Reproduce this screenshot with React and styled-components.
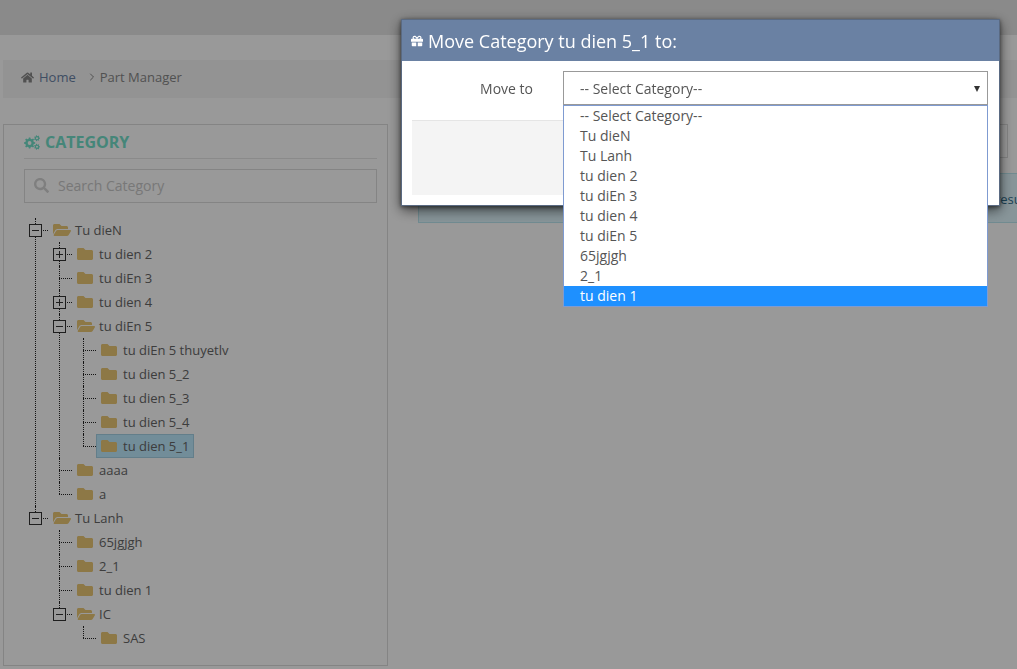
import React from "react";
import styled, { createGlobalStyle } from "styled-components";
import { ChevronRight } from "lucide-react";
import { FaHome, FaSearch, FaFolder, FaFolderOpen, FaGift } from "react-icons/fa";

const Global = createGlobalStyle`
  html, body { margin: 0; padding: 0; height: 669px; overflow: hidden; background: #fff; }
  body { font-family: "Open Sans", "Liberation Sans", sans-serif; font-size: 13px; color: #555; }
  * { box-sizing: border-box; }
`;

const Page = styled.div`
  height: 669px;
  overflow: hidden;
`;
const TopBar = styled.header`
  height: 35px;
  background: #e6e6e6;
`;
const Breadcrumb = styled.nav`
  margin: 25px 0 26px 3px;
  height: 38px;
  padding: 0 0 4px 18px;
  background: #f5f5f5;
  display: flex;
  align-items: center;
  font-size: 13px;
  color: #888;
`;
const HomeIcon = styled(FaHome)`
  width: 13px;
  height: 13px;
  color: #888;
  margin-right: 5px;
`;
const HomeLink = styled.a`
  color: #6a82a5;
`;
const Crumb = styled(ChevronRight)`
  width: 12px;
  height: 12px;
  color: #888;
  margin: 0 2px 0 10px;
`;
const Columns = styled.div`
  display: grid;
  grid-template-columns: 385px 1fr;
  column-gap: 30px;
  margin-left: 3px;
`;
const Panel = styled.section`
  height: 542px;
  border: 1px solid #ddd;
  padding: 0 10px 0 20px;
`;
const PanelTitle = styled.h2`
  margin: 0;
  height: 34px;
  display: flex;
  align-items: center;
  gap: 5px;
  font-size: 16px;
  font-weight: 700;
  color: #73e0ca;
  border-bottom: 1px solid #e6e6e6;
  padding-top: 1px;
`;
const SearchBox = styled.label`
  margin-top: 10px;
  height: 34px;
  border: 1px solid #ddd;
  display: flex;
  align-items: center;
  gap: 8px;
  padding: 0 0 2px 9px;
  font-size: 14px;
  color: #c8c8c8;
`;
const SearchIcon = styled(FaSearch)`
  width: 15px;
  height: 15px;
  margin-right: 1px;
  color: #d4d4d4;
`;
const TreeList = styled.ul`
  list-style: none;
  margin: ${p => (p.$root ? "15px 0 0" : "0 0 0 24px")};
  padding: 0;
`;
const TreeItem = styled.li`
  position: relative;
  &::before {
    content: "";
    position: absolute;
    left: 11px;
    top: 0;
    bottom: ${p => (p.$last ? "auto" : "0")};
    height: ${p => (p.$last ? (p.$box ? "6px" : "12px") : "auto")};
    border-left: 1px dotted #222;
  }
  &::after {
    content: "";
    position: absolute;
    left: 11px;
    top: 12px;
    width: 13px;
    border-top: 1px dotted #222;
  }
`;
const Row = styled.div`
  position: relative;
  height: 24px;
  padding-left: 24px;
  display: flex;
  align-items: center;
`;
const Toggle = styled.span`
  position: absolute;
  z-index: 1;
  left: 5px;
  top: 6px;
  width: 13px;
  height: 13px;
  background: #fff;
  border: 1px solid #333;
  &::before {
    content: "";
    position: absolute;
    left: 2px;
    right: 2px;
    top: 5px;
    height: 1px;
    background: #333;
  }
  &::after {
    content: "";
    display: ${p => (p.$open ? "none" : "block")};
    position: absolute;
    top: 2px;
    bottom: 2px;
    left: 5px;
    width: 1px;
    background: #333;
  }
`;
const Label = styled.span`
  height: 24px;
  display: inline-flex;
  align-items: center;
  padding: 0 4px;
  gap: 6px;
  color: #666;
  white-space: nowrap;
  border: 1px solid ${p => (p.$selected ? "#a5d2e6" : "transparent")};
  background: ${p => (p.$selected ? "#beebff" : "transparent")};
`;
const Closed = styled(FaFolder)`
  width: 16px;
  height: 16px;
  color: #ebc875;
`;
const Opened = styled(FaFolderOpen)`
  width: 18px;
  height: 16px;
  margin-right: -2px;
  color: #ebc875;
`;
const Aside = styled.div`
  min-width: 0;
`;
const InputGhost = styled.div`
  height: 34px;
  width: 590px;
  border: 1px solid #ddd;
`;
const Notice = styled.div`
  margin-top: 15px;
  height: 50px;
  width: 700px;
  padding-left: 576px;
  background: #e2f8ff;
  border: 1px solid #bce8f1;
  color: #31708f;
  font-size: 13px;
  line-height: 50px;
  white-space: nowrap;
`;

const Overlay = styled.div`
  position: fixed;
  z-index: 10;
  inset: 0;
  background: rgba(0, 0, 0, 0.4);
  padding: 19px 0 0 401px;
`;
const Modal = styled.div`
  width: 599px;
  height: 187px;
  background: #fff;
  border: 1px solid #5a6a82;
  box-shadow: 0 4px 12px rgba(0, 0, 0, 0.6), 0 1px 4px rgba(0, 0, 0, 0.5);
`;
const ModalHeader = styled.div`
  height: 41px;
  background: #6a81a3;
  color: #fff;
  display: flex;
  align-items: center;
  padding-left: 9px;
  gap: 5px;
  font-size: 18px;
`;
const GiftIcon = styled(FaGift)`
  width: 12px;
  height: 12px;
`;
const ModalBody = styled.div`
  padding: 10px 11px 0 10px;
`;
const FormRow = styled.div`
  display: flex;
  align-items: center;
  font-size: 14px;
  color: #555;
`;
const FieldLabel = styled.span`
  width: 121px;
  text-align: right;
  margin-right: 30px;
`;
const Select = styled.div`
  position: relative;
  width: 425px;
  height: 34px;
  border: 1px solid #999;
  padding-left: 16px;
  display: flex;
  align-items: center;
  color: #555;
`;
const Arrow = styled.span`
  position: absolute;
  right: 7px;
  top: 14px;
  width: 0;
  height: 0;
  border-left: 3px solid transparent;
  border-right: 3px solid transparent;
  border-top: 6px solid #333;
`;
const GreyBox = styled.div`
  margin-top: 15px;
  height: 75px;
  width: 576px;
  background: #f4f4f4;
  border-top: 1px solid #e5e5e5;
`;
const Dropdown = styled.ul`
  position: absolute;
  z-index: 2;
  left: -1px;
  top: 33px;
  width: 425px;
  margin: 0;
  padding: 0;
  list-style: none;
  background: #fff;
  border: 1px solid #7f9bd1;
`;
const Option = styled.li`
  height: 20px;
  line-height: 20px;
  padding-left: 16px;
  font-size: 14px;
  color: ${p => (p.$active ? "#fff" : "#555")};
  background: ${p => (p.$active ? "#1e90ff" : "#fff")};
`;

const TitleIcon = styled.svg`
  width: 16px;
  height: 15px;
  flex: none;
`;

function gearPath(cx, cy, outer, inner, hole, teeth) {
  let d = "";
  const step = (Math.PI * 2) / teeth;
  for (let i = 0; i < teeth; i++) {
    const a = i * step;
    const pts = [
      [inner, a - step * 0.5],
      [inner, a - step * 0.3],
      [outer, a - step * 0.17],
      [outer, a + step * 0.17],
      [inner, a + step * 0.3],
    ];
    pts.forEach(([r, t], j) => {
      const x = (cx + r * Math.cos(t)).toFixed(2);
      const y = (cy + r * Math.sin(t)).toFixed(2);
      d += `${i === 0 && j === 0 ? "M" : "L"}${x} ${y}`;
    });
  }
  d += `Z M${cx - hole} ${cy}a${hole} ${hole} 0 1 0 ${hole * 2} 0a${hole} ${hole} 0 1 0 ${-hole * 2} 0Z`;
  return d;
}

const CogsGlyph = () => (
  <TitleIcon viewBox="0 0 16 15" fill="currentColor">
    <path fillRule="evenodd" d={gearPath(5.6, 8, 5.6, 4.3, 1.9, 8)} />
    <path fillRule="evenodd" d={gearPath(13, 3.2, 3, 2.2, 1, 7)} />
    <path fillRule="evenodd" d={gearPath(13, 11.8, 3, 2.2, 1, 7)} />
  </TitleIcon>
);

const tree = [
  { t: "Tu dieN", open: true, c: [
    { t: "tu dien 2", closedBox: true },
    { t: "tu diEn 3" },
    { t: "tu dien 4", closedBox: true },
    { t: "tu diEn 5", open: true, c: [
      { t: "tu diEn 5 thuyetlv" },
      { t: "tu dien 5_2" },
      { t: "tu dien 5_3" },
      { t: "tu dien 5_4" },
      { t: "tu dien 5_1", selected: true },
    ]},
    { t: "aaaa" },
    { t: "a" },
  ]},
  { t: "Tu Lanh", open: true, c: [
    { t: "65jgjgh" },
    { t: "2_1" },
    { t: "tu dien 1" },
    { t: "IC", open: true, c: [{ t: "SAS" }] },
  ]},
];

const options = ["-- Select Category--", "Tu dieN", "Tu Lanh", "tu dien 2", "tu diEn 3", "tu dien 4", "tu diEn 5", "65jgjgh", "2_1", "tu dien 1"];

function Nodes({ items, root }) {
  return (
    <TreeList $root={root}>
      {items.map((n, i) => {
        const box = n.open || n.closedBox;
        return (
          <TreeItem key={n.t} $last={i === items.length - 1} $box={box}>
            <Row>
              {box && <Toggle $open={n.open} />}
              <Label $selected={n.selected}>
                {n.open ? <Opened /> : <Closed />}
                {n.t}
              </Label>
            </Row>
            {n.c && <Nodes items={n.c} />}
          </TreeItem>
        );
      })}
    </TreeList>
  );
}

export default function App() {
  return (
    <Page>
      <Global />
      <TopBar />
      <Breadcrumb>
        <HomeIcon />
        <HomeLink>Home</HomeLink>
        <Crumb />
        <span>Part Manager</span>
      </Breadcrumb>
      <Columns>
        <Panel>
          <PanelTitle><CogsGlyph />CATEGORY</PanelTitle>
          <SearchBox><SearchIcon />Search Category</SearchBox>
          <Nodes items={tree} root />
        </Panel>
        <Aside>
          <InputGhost />
          <Notice>result</Notice>
        </Aside>
      </Columns>
      <Overlay>
        <Modal>
          <ModalHeader><GiftIcon />Move Category tu dien 5_1 to:</ModalHeader>
          <ModalBody>
            <FormRow>
              <FieldLabel>Move to</FieldLabel>
              <Select>
                -- Select Category--
                <Arrow />
                <Dropdown>
                  {options.map((o, i) => (
                    <Option key={o} $active={i === options.length - 1}>{o}</Option>
                  ))}
                </Dropdown>
              </Select>
            </FormRow>
            <GreyBox />
          </ModalBody>
        </Modal>
      </Overlay>
    </Page>
  );
}
